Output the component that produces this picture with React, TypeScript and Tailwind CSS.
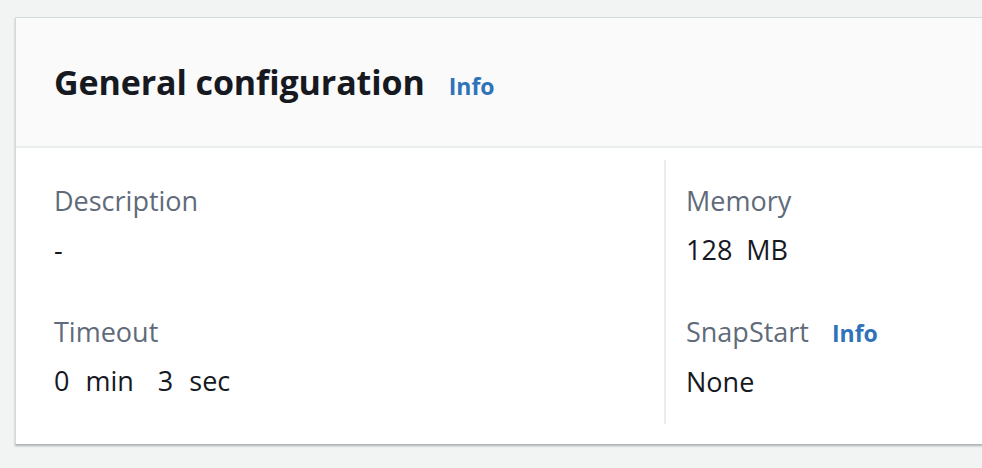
const Field = ({ label, value, info }: { label: string; value: React.ReactNode; info?: boolean }) => (
  <div className="flex flex-col">
    <div className="flex items-baseline gap-[23px] text-[27px] leading-[34px] text-[#5f6b7a]">
      <span>{label}</span>
      {info && <span className="text-[23px] font-bold text-[#2e73b8]">Info</span>}
    </div>
    <div className="mt-[15px] text-[27px] leading-[34px] text-[#16191f] whitespace-pre">{value}</div>
  </div>
);

export default function App() {
  return (
    <div
      className="w-[982px] h-[468px] overflow-hidden bg-[#f2f3f3] pt-[17px] pl-[15px]"
      style={{ fontFamily: '"Open Sans", "Noto Sans", Arial, sans-serif' }}
    >
      <div className="w-[1100px] bg-white border-l border-t border-[#d5dbdb] shadow-[0_2px_2px_rgba(0,28,36,0.3)]">
        <div className="h-[130px] flex items-center gap-[24px] pl-[38px] bg-[#fafafa] border-b-2 border-[#eaeded]">
          <h2 className="text-[34px] font-bold text-[#16191f] tracking-[-0.1px]">General configuration</h2>
          <span className="text-[23px] font-bold text-[#2e73b8] mt-2">Info</span>
        </div>
        <div className="flex pt-[12px] pb-[20px] h-[296px]">
          <div className="w-[648px] pl-[38px] pt-[24px] flex flex-col gap-[48px]">
            <Field label="Description" value="-" />
            <Field
              label="Timeout"
              value={
                <span>
                  0<span className="ml-[16px]">min</span>
                  <span className="ml-[24px]">3</span>
                  <span className="ml-[16px]">sec</span>
                </span>
              }
            />
          </div>
          <div className="border-l-2 border-[#eaeded] pl-[20px] pt-[24px] flex flex-col gap-[48px]">
            <Field
              label="Memory"
              value={
                <span>
                  128<span className="ml-[14px]">MB</span>
                </span>
              }
            />
            <Field label="SnapStart" value="None" info />
          </div>
        </div>
      </div>
    </div>
  );
}
